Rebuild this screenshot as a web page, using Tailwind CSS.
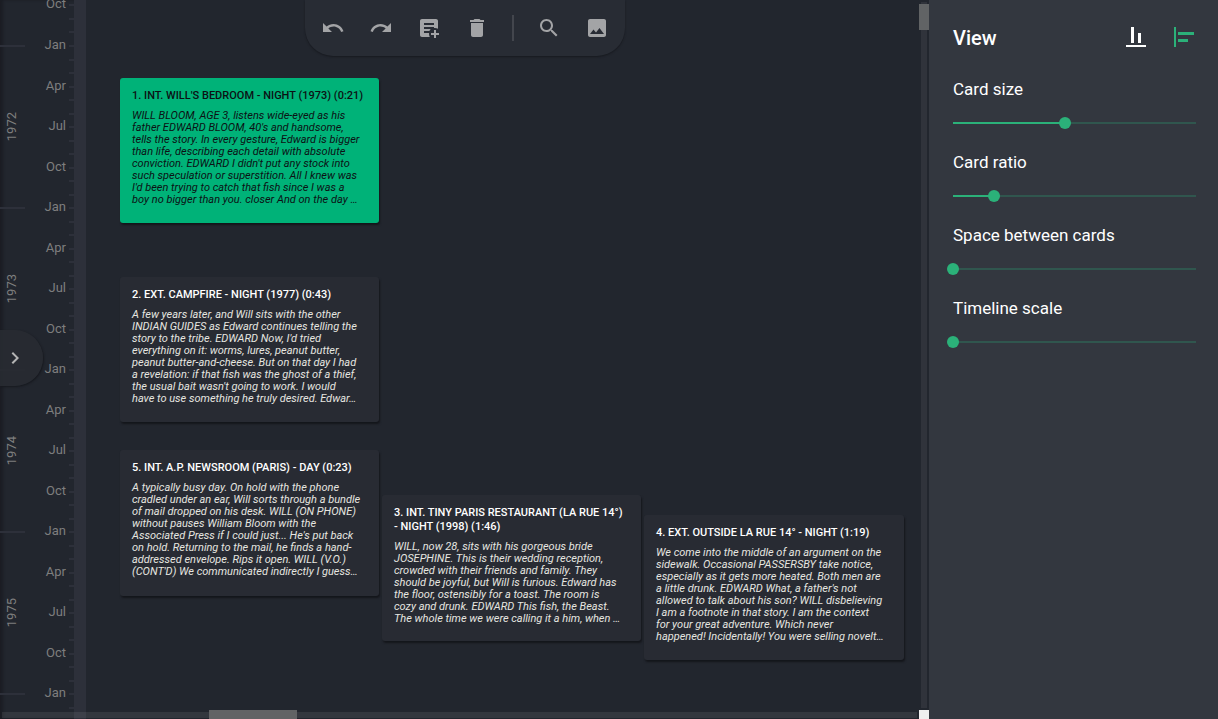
<!DOCTYPE html>
<html lang="en">
<head>
    <meta charset="UTF-8">
    <meta name="viewport" content="width=device-width, initial-scale=1.0">
    <title>Timeline</title>
    <script src="https://cdn.jsdelivr.net/npm/@tailwindcss/browser@4"></script>
</head>
<body class="flex h-screen overflow-hidden bg-[#22262e] font-[Roboto,sans-serif] text-white">

    <main class="relative min-w-0 flex-1 overflow-hidden">

        <!-- Time ruler -->
        <div class="flex h-full w-[86px] items-start overflow-hidden border-r-12 border-[#2d303a] shadow-[inset_3px_0_3px_#1b1d24]">
            <div id="ruler" class="w-full pt-1 text-[13px] text-[#7e7e7e]"></div>
        </div>

        <!-- Scene cards -->
        <section aria-label="Scenes">
            <article class="absolute left-[120px] top-[78px] h-[145px] w-[259px] overflow-hidden rounded-[3px] bg-[#00b278] px-3 pt-[11px] text-[#0c1114] shadow-[1px_2px_2px_#14161b]">
                <h2 class="text-[11px] leading-[14px] font-medium">1. INT. WILL'S BEDROOM - NIGHT (1973) (0:21)</h2>
                <p class="mt-[7px] text-[11px] leading-[12px] whitespace-nowrap italic">WILL BLOOM, AGE 3, listens wide-eyed as his<br>father EDWARD BLOOM, 40's and handsome,<br>tells the story. In every gesture, Edward is bigger<br>than life, describing each detail with absolute<br>conviction. EDWARD I didn't put any stock into<br>such speculation or superstition. All I knew was<br>I'd been trying to catch that fish since I was a<br>boy no bigger than you. closer And on the day …</p>
            </article>
            <article class="absolute left-[120px] top-[277px] h-[145px] w-[259px] overflow-hidden rounded-[3px] bg-[#282b33] px-3 pt-[11px] shadow-[1px_2px_2px_#14161b]">
                <h2 class="text-[11px] leading-[14px] font-medium">2. EXT. CAMPFIRE - NIGHT (1977) (0:43)</h2>
                <p class="mt-[7px] text-[11px] leading-[12px] whitespace-nowrap text-[#e6e6e0] italic">A few years later, and Will sits with the other<br>INDIAN GUIDES as Edward continues telling the<br>story to the tribe. EDWARD Now, I'd tried<br>everything on it: worms, lures, peanut butter,<br>peanut butter-and-cheese. But on that day I had<br>a revelation: if that fish was the ghost of a thief,<br>the usual bait wasn't going to work. I would<br>have to use something he truly desired. Edwar…</p>
            </article>
            <article class="absolute left-[120px] top-[450px] h-[146px] w-[259px] overflow-hidden rounded-[3px] bg-[#282b33] px-3 pt-[11px] shadow-[1px_2px_2px_#14161b]">
                <h2 class="text-[11px] leading-[14px] font-medium">5. INT. A.P. NEWSROOM (PARIS) - DAY (0:23)</h2>
                <p class="mt-[7px] text-[11px] leading-[12px] whitespace-nowrap text-[#e6e6e0] italic">A typically busy day. On hold with the phone<br>cradled under an ear, Will sorts through a bundle<br>of mail dropped on his desk. WILL (ON PHONE)<br>without pauses William Bloom with the<br>Associated Press if I could just... He's put back<br>on hold. Returning to the mail, he finds a hand-<br>addressed envelope. Rips it open. WILL (V.O.)<br>(CONT'D) We communicated indirectly I guess…</p>
            </article>
            <article class="absolute left-[382px] top-[495px] h-[146px] w-[259px] overflow-hidden rounded-[3px] bg-[#282b33] px-3 pt-[11px] shadow-[1px_2px_2px_#14161b]">
                <h2 class="text-[11px] leading-[14px] font-medium">3. INT. TINY PARIS RESTAURANT (LA RUE 14°)<br>- NIGHT (1998) (1:46)</h2>
                <p class="mt-[7px] text-[11px] leading-[12px] whitespace-nowrap text-[#e6e6e0] italic">WILL, now 28, sits with his gorgeous bride<br>JOSEPHINE. This is their wedding reception,<br>crowded with their friends and family. They<br>should be joyful, but Will is furious. Edward has<br>the floor, ostensibly for a toast. The room is<br>cozy and drunk. EDWARD This fish, the Beast.<br>The whole time we were calling it a him, when …</p>
            </article>
            <article class="absolute left-[644px] top-[515px] h-[145px] w-[260px] overflow-hidden rounded-[3px] bg-[#282b33] px-3 pt-[11px] shadow-[1px_2px_2px_#14161b]">
                <h2 class="text-[11px] leading-[14px] font-medium">4. EXT. OUTSIDE LA RUE 14° - NIGHT (1:19)</h2>
                <p class="mt-[7px] text-[11px] leading-[12px] whitespace-nowrap text-[#e6e6e0] italic">We come into the middle of an argument on the<br>sidewalk. Occasional PASSERSBY take notice,<br>especially as it gets more heated. Both men are<br>a little drunk. EDWARD What, a father's not<br>allowed to talk about his son? WILL disbelieving<br>I am a footnote in that story. I am the context<br>for your great adventure. Which never<br>happened! Incidentally! You were selling novelt…</p>
            </article>
        </section>

        <!-- Toolbar -->
        <div class="absolute inset-x-0 top-0 flex justify-center">
            <div role="toolbar" aria-label="Timeline tools" class="flex h-14 items-center gap-6 rounded-b-[28px] bg-[#282c34] px-4 text-[#a3a4a6] shadow-[0_1px_2px_#17191f]">
                <button type="button" aria-label="Undo"><svg class="size-6 fill-current" viewBox="0 0 24 24"><path d="M12.5 8c-2.65 0-5.05.99-6.9 2.6L2 7v9h9l-3.62-3.62c1.39-1.16 3.16-1.88 5.12-1.88 3.54 0 6.55 2.31 7.6 5.5l2.37-.78C21.08 11.03 17.15 8 12.5 8z"/></svg></button>
                <button type="button" aria-label="Redo"><svg class="size-6 fill-current" viewBox="0 0 24 24"><path d="M18.4 10.6C16.55 8.99 14.15 8 11.5 8c-4.65 0-8.58 3.03-9.96 7.22L3.9 16c1.05-3.19 4.05-5.5 7.6-5.5 1.95 0 3.73.72 5.12 1.88L13 16h9V7l-3.6 3.6z"/></svg></button>
                <button type="button" aria-label="Add card"><svg class="size-6 fill-current" viewBox="0 0 24 24"><path fill-rule="evenodd" d="M17 14h2v3h3v2h-3v3h-2v-3h-3v-2h3v-3zM5 3h14c1.11 0 2 .89 2 2v7.8c-.88-.51-1.91-.8-3-.8l-1 .08V11H7v2h6.69c-.54.58-.98 1.26-1.28 2H7v2h5.08L12 18c0 1.09.29 2.12.8 3H5c-1.11 0-2-.89-2-2V5c0-1.11.89-2 2-2zm2 4v2h10V7H7z"/></svg></button>
                <button type="button" aria-label="Delete card"><svg class="size-6 fill-current" viewBox="0 0 24 24"><path d="M6 19c0 1.1.9 2 2 2h8c1.1 0 2-.9 2-2V7H6v12zM19 4h-3.5l-1-1h-5l-1 1H5v2h14V4z"/></svg></button>
                <span class="-mx-px h-[26px] w-[2px] bg-[#43464d]"></span>
                <button type="button" aria-label="Search"><svg class="size-6 fill-current" viewBox="0 0 24 24"><path d="M15.5 14h-.79l-.28-.27C15.41 12.59 16 11.11 16 9.5 16 5.91 13.09 3 9.5 3S3 5.91 3 9.5 5.91 16 9.5 16c1.61 0 3.09-.59 4.23-1.57l.27.28v.79l5 4.99L20.49 19l-4.99-5zm-6 0C7.01 14 5 11.99 5 9.5S7.01 5 9.5 5 14 7.01 14 9.5 11.99 14 9.5 14z"/></svg></button>
                <button type="button" aria-label="Export image"><svg class="size-6 fill-current" viewBox="0 0 24 24"><path d="M21 19V5c0-1.1-.9-2-2-2H5c-1.1 0-2 .9-2 2v14c0 1.1.9 2 2 2h14c1.1 0 2-.9 2-2zM8.5 13.5l2.5 3.01L14.5 12l4.5 6H5l3.5-4.5z"/></svg></button>
            </div>
        </div>

        <!-- Navigator handle -->
        <div class="absolute inset-y-0 left-0 flex items-center pb-[3px]">
            <button type="button" aria-label="Open navigator" class="flex h-14 w-[43px] items-center rounded-r-full bg-[#282b32]/90 pl-[3px] text-[#b4b4b4] shadow-[1px_1px_2px_#17191f]">
                <svg class="size-6 fill-current" viewBox="0 0 24 24"><path d="M10 6 8.59 7.41 13.17 12l-4.58 4.59L10 18l6-6z"/></svg>
            </button>
        </div>

        <!-- Scrollbars -->
        <div class="absolute top-[2px] right-0 bottom-[11px] w-2.5">
            <div class="mx-auto h-full w-1.5 bg-[#30333b]"></div>
            <div class="absolute top-[2px] h-[26px] w-full bg-[#616365]"></div>
        </div>
        <div class="absolute right-3 bottom-px left-[2px] h-1.5 bg-white/8"></div>
        <div class="absolute bottom-0 left-[209px] h-[9px] w-[88px] bg-[#616365]"></div>
        <div class="absolute right-0 bottom-0 h-[9px] w-2.5 bg-[#efefef]"></div>
    </main>

    <!-- View settings -->
    <aside class="w-[289px] shrink-0 bg-[#33373f] pt-6 pr-[22px] pl-6">
        <header class="flex h-[26px] items-center gap-6">
            <h1 class="flex-1 pt-0.5 text-xl font-medium">View</h1>
            <button type="button" aria-label="Vertical timeline"><svg class="size-6 fill-current" viewBox="0 0 24 24"><path d="M22 22H2v-2h20v2zM10 2H7v16h3V2zm7 6h-3v10h3V8z"/></svg></button>
            <button type="button" aria-label="Horizontal timeline" aria-pressed="true" class="text-[#2bb179]"><svg class="size-6 fill-current" viewBox="0 0 24 24"><path d="M4 22H2V2h2v20zM22 7H6v3h16V7zm-6 7H6v3h10v-3z"/></svg></button>
        </header>
        <form id="view-form" class="mt-[27px] space-y-[17px]"></form>
    </aside>

    <script>
        const ruler = document.getElementById('ruler');
        const viewForm = document.getElementById('view-form');

        const quarters = ['Jan', 'Apr', 'Jul', 'Oct'];
        const years = [1972, 1973, 1974, 1975];
        const settings = [
            { id: 'card-size', label: 'Card size', value: 46 },
            { id: 'card-ratio', label: 'Card ratio', value: 17 },
            { id: 'card-space', label: 'Space between cards', value: 0 },
            { id: 'time-scale', label: 'Timeline scale', value: 0 },
        ];

        // quarter names with their three month ticks
        function renderQuarters(names) {
            return `
                <div class="flex flex-1 flex-col pr-[3px] text-right leading-4">
                    ${names.map((name) => `<div class="flex-1"><span class="-mt-2 block">${name}</span></div>`).join('')}
                </div>
                <div class="flex w-[5px] flex-col">
                    ${names.map(() => '<i class="flex-1 border-t-2 border-[#2d303a]"></i>'.repeat(3)).join('')}
                </div>
            `;
        }

        // the visible range starts in the last quarter of 1971 and ends in the first of 1976
        ruler.innerHTML = `
            <div class="flex h-[41px]">
                <div class="w-[25px]"></div>
                ${renderQuarters(['Oct'])}
            </div>
            ${years.map((year) => `
                <div class="flex h-[162px]">
                    <div class="flex w-[25px] items-center border-t-2 border-[#2d303a]">
                        <span class="w-6 rotate-180 leading-6 [writing-mode:vertical-rl]">${year}</span>
                    </div>
                    ${renderQuarters(quarters)}
                </div>
            `).join('')}
            <div class="flex h-[41px]">
                <div class="w-[25px] border-t-2 border-[#2d303a]"></div>
                ${renderQuarters(['Jan'])}
            </div>
        `;

        viewForm.innerHTML = settings.map((s) => `
            <div>
                <label for="${s.id}" class="block text-[17px] leading-6">${s.label}</label>
                <div class="mt-3 -mx-1.5">
                    <input type="range" id="${s.id}" value="${s.value}" style="--fill: ${s.value}%" class="block h-5 w-full appearance-none bg-[linear-gradient(to_right,#2bb179_var(--fill),#30564e_var(--fill))] bg-[length:calc(100%-12px)_2px] bg-center bg-no-repeat [&::-webkit-slider-thumb]:size-3 [&::-webkit-slider-thumb]:appearance-none [&::-webkit-slider-thumb]:rounded-full [&::-webkit-slider-thumb]:bg-[#2bb179]">
                </div>
            </div>
        `).join('');

        viewForm.addEventListener('input', (e) => {
            e.target.style.setProperty('--fill', `${e.target.value}%`);
        });
    </script>
</body>
</html>
